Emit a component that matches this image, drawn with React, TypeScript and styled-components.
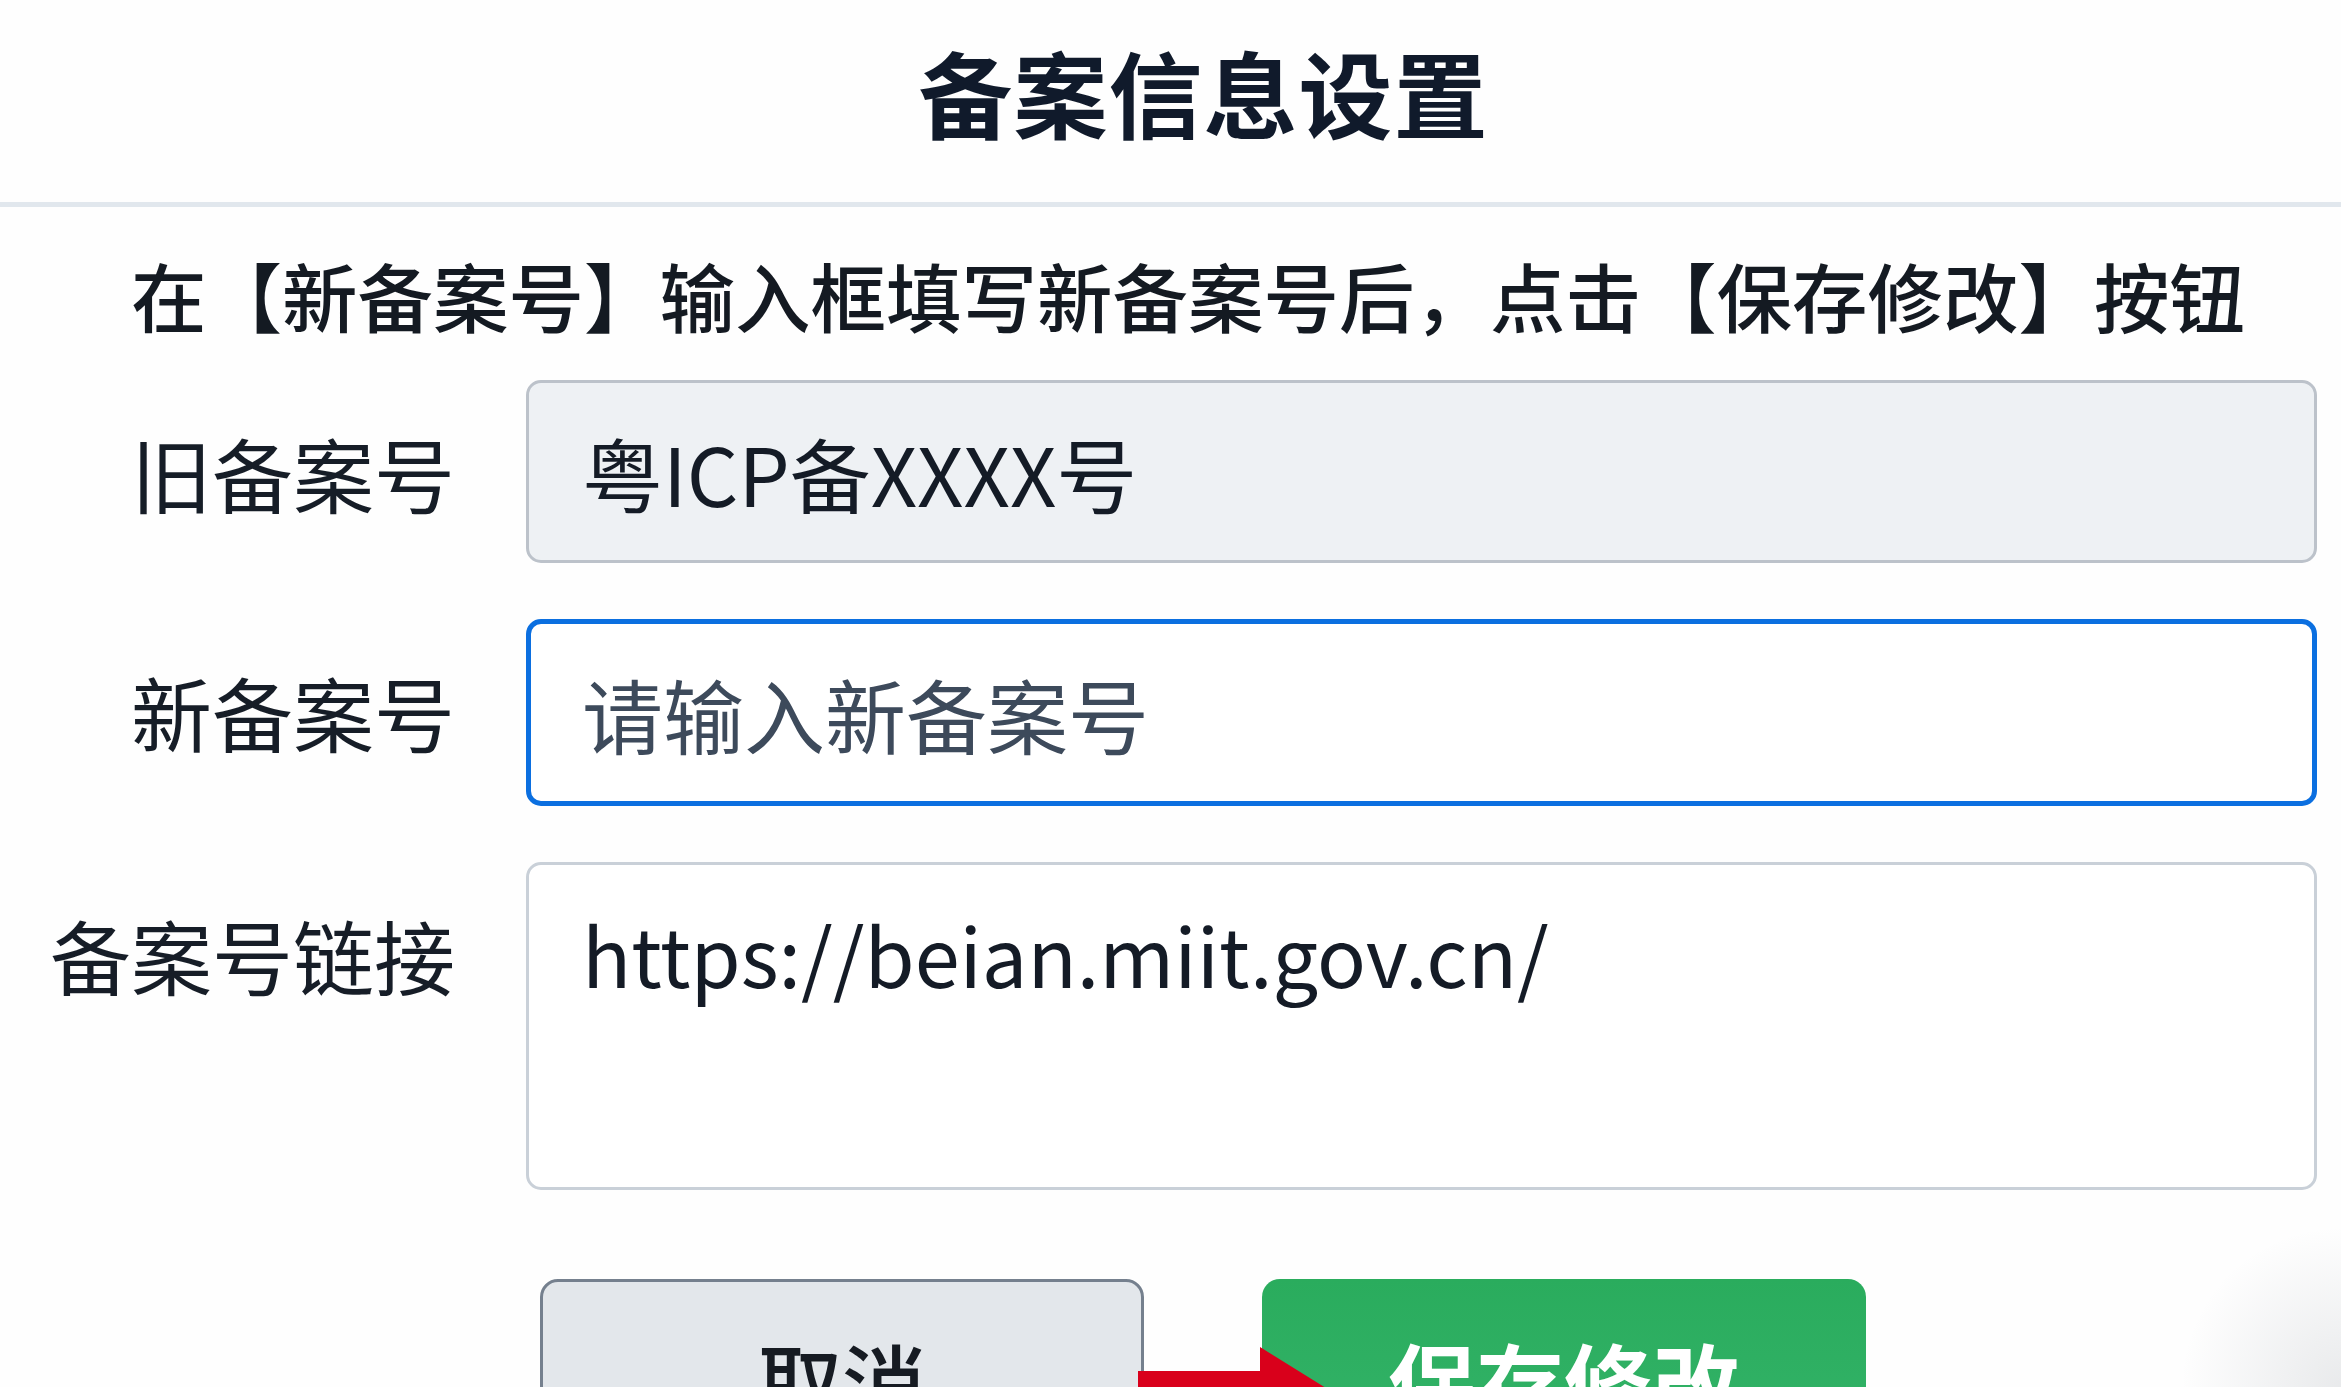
import styled, { createGlobalStyle } from "styled-components";

const GlobalStyle = createGlobalStyle`
  html, body {
    margin: 0;
    padding: 0;
    height: 100%;
    overflow: hidden;
  }
  body {
    background:
      radial-gradient(circle at 100% 100%, rgba(120, 128, 138, 0.16), rgba(255, 255, 255, 0) 160px),
      #fefefe;
    font-family: "Noto Sans CJK SC", "Noto Sans", sans-serif;
    color: #141b26;
  }
`;

export default function App() {
  const fields = [
    { label: "旧备案号", kind: "old", value: "粤ICP备XXXX号" },
    { label: "新备案号", kind: "new", placeholder: "请输入新备案号" },
  ];

  return (
    <Page>
      <GlobalStyle />
      <Header>
        <Title>备案信息设置</Title>
      </Header>
      <Hint>在【新备案号】输入框填写新备案号后，点击【保存修改】按钮</Hint>
      <Form>
        {fields.map((field) => (
          <Row key={field.label}>
            <Label>{field.label}</Label>
            {field.kind === "old" ? (
              <OldInput readOnly value={field.value} />
            ) : (
              <NewInput placeholder={field.placeholder} />
            )}
          </Row>
        ))}
        <Row>
          <Label>备案号链接</Label>
          <LinkArea defaultValue="https://beian.miit.gov.cn/" />
        </Row>
      </Form>
      <Actions>
        <CancelButton>取消</CancelButton>
        <SaveButton>保存修改</SaveButton>
        <Arrow width="220" height="120" viewBox="0 0 220 120">
          <path d="M0 24 H122 V0 L204 51 L122 102 V78 H0 Z" fill="#d9001b" />
        </Arrow>
      </Actions>
    </Page>
  );
}

const Page = styled.div`
  width: 2341px;
  height: 1387px;
  overflow: hidden;
  display: flex;
  flex-direction: column;

  & > * {
    flex-shrink: 0;
  }
`;

const Header = styled.header`
  height: 207px;
  box-sizing: border-box;
  display: flex;
  align-items: center;
  justify-content: center;
  padding: 0 0 20px 66px;
  border-bottom: 5px solid #e1e7ed;
`;

const Title = styled.h1`
  margin: 0;
  font-size: 94px;
  font-weight: 700;
  line-height: 1.2;
  color: #101a2b;
  letter-spacing: 1px;
`;

const Hint = styled.p`
  margin: 0;
  height: 173px;
  display: flex;
  align-items: center;
  padding-left: 131px;
  font-size: 75.5px;
  font-weight: 500;
  color: #141a22;
  white-space: nowrap;
`;

const Form = styled.div`
  display: flex;
  flex-direction: column;
  gap: 56px;
  padding-right: 24px;
`;

const Row = styled.div`
  display: grid;
  grid-template-columns: 455px 1fr;
  column-gap: 71px;
  align-items: start;
`;

const Label = styled.label`
  text-align: right;
  font-size: 81px;
  line-height: 183px;
  color: #161d27;
  white-space: nowrap;
`;

const fieldBase = `
  box-sizing: border-box;
  width: 100%;
  margin: 0;
  font-family: "Noto Sans CJK SC", "Noto Sans", sans-serif;
  font-size: 81px;
  color: #141b26;
  outline: none;
  border-radius: 15px;
`;

const OldInput = styled.input`
  ${fieldBase}
  height: 183px;
  padding: 0 53px;
  background: #eef1f4;
  border: 3px solid #bcc2ca;
`;

const NewInput = styled.input`
  ${fieldBase}
  height: 187px;
  padding: 0 51px;
  background: #ffffff;
  border: 5px solid #0b6fe0;

  &::placeholder {
    color: #3d4a5b;
    opacity: 1;
  }
`;

const LinkArea = styled.textarea`
  ${fieldBase}
  height: 328px;
  padding: 31px 53px;
  line-height: 1.4;
  resize: none;
  background: #ffffff;
  border: 3px solid #c9d0d8;
`;

const Actions = styled.div`
  position: relative;
  display: flex;
  gap: 118px;
  margin-top: 89px;
  padding-left: 540px;
`;

const buttonBase = `
  box-sizing: border-box;
  width: 604px;
  height: 200px;
  border-radius: 18px;
  font-family: "Noto Sans CJK SC", "Noto Sans", sans-serif;
  font-size: 84px;
  cursor: pointer;
`;

const CancelButton = styled.button`
  ${buttonBase}
  background: #e3e7eb;
  border: 3px solid #75808e;
  color: #161b22;
  font-weight: 500;
`;

const SaveButton = styled.button`
  ${buttonBase}
  background: linear-gradient(180deg, #2aac5d 0%, #34b46a 100%);
  border: none;
  color: #ffffff;
  font-weight: 700;
  font-size: 88px;
`;

const Arrow = styled.svg`
  position: absolute;
  left: 1138px;
  top: 68px;
`;
